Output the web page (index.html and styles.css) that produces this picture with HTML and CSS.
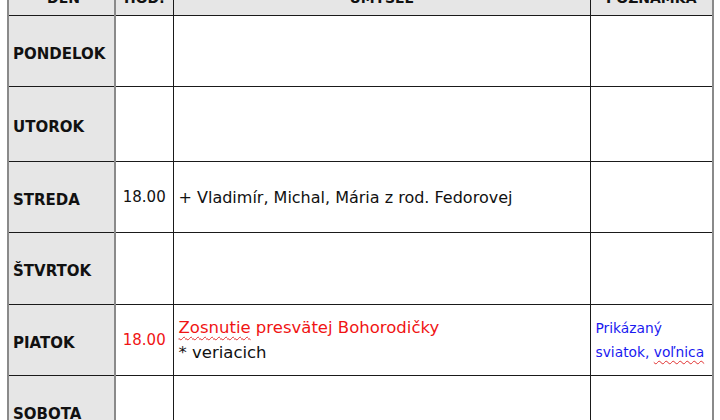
FILE: index.html
```html
<!DOCTYPE html>
<html lang="sk">
<head>
<meta charset="utf-8">
<link rel="stylesheet" href="styles.css">
</head>
<body>
<div class="page">
<table class="schedule">
  <colgroup>
    <col class="c-day"><col class="c-hod"><col class="c-umysel"><col class="c-pozn">
  </colgroup>
  <thead>
    <tr class="head">
      <th class="day">DEŇ</th><th>HOD.</th><th>ÚMYSEL</th><th class="last">POZNÁMKA</th>
    </tr>
  </thead>
  <tbody>
    <tr class="r1"><td class="day">PONDELOK</td><td></td><td></td><td class="last"></td></tr>
    <tr class="r2"><td class="day">UTOROK</td><td></td><td></td><td class="last"></td></tr>
    <tr class="r3"><td class="day">STREDA</td><td class="hod">18.00</td><td class="um">+ Vladimír, Michal, Mária z rod. Fedorovej</td><td class="last"></td></tr>
    <tr class="r4"><td class="day">ŠTVRTOK</td><td></td><td></td><td class="last"></td></tr>
    <tr class="r5"><td class="day">PIATOK</td><td class="hod red">18.00</td><td class="um"><div class="red"><span class="spell">Zosnutie</span> presvätej Bohorodičky</div><div>* veriacich</div></td><td class="last pozn"><div>Prikázaný</div><div>sviatok, <span class="spell">voľnica</span></div></td></tr>
    <tr class="r6"><td class="day">SOBOTA</td><td></td><td></td><td class="last"></td></tr>
  </tbody>
</table>
</div>
</body>
</html>
```
FILE: styles.css
```css
html, body {
  margin: 0;
  padding: 0;
  background: #fff;
}
.page {
  padding: 0 7px;
  overflow: hidden;
  height: 420px;
}
.schedule {
  margin-top: -15px;
  border-collapse: collapse;
  table-layout: fixed;
  width: 705px;
  font-family: "DejaVu Sans", "Liberation Sans", sans-serif;
  font-size: 16px;
  color: #111;
}
.c-day { width: 107px; }
.c-hod { width: 58px; }
.c-umysel { width: 417px; }
.c-pozn { width: 123px; }
.schedule th, .schedule td {
  border: 1px solid #1a1a1a;
  padding: 0 5px;
  vertical-align: middle;
  box-sizing: border-box;
}
.schedule th {
  background: #e6e6e6;
  height: 30px;
  vertical-align: top;
  padding-top: 4px;
  font-weight: bold;
  font-size: 14px;
  text-align: center;
}
.schedule .day {
  background: #e6e6e6;
  border-left: 2px solid #8a8a8a;
  border-right: 2px solid #8a8a8a;
  font-weight: bold;
  font-size: 15px;
  padding-left: 4px;
  padding-right: 0;
  padding-top: 5px;
}
.schedule th.day { padding-top: 4px; font-size: 14px; }
.schedule .last {
  border-right: 2px solid #8a8a8a;
}
.r1 td { height: 71px; }
.r2 td { height: 75px; }
.r3 td { height: 71px; }
.r4 td { height: 72px; }
.r5 td { height: 71px; }
.r6 td { height: 72px; }
.hod {
  text-align: center;
  font-size: 15px;
  padding: 0 2px;
}
.um {
  padding-left: 5px;
}
.red { color: #f01414; }
.r5 .um { font-size: 16.5px; line-height: 25px; }
.pozn {
  color: #1a1af0;
  font-size: 13.8px;
  line-height: 24px;
  padding-left: 4px;
  padding-right: 0;
}
.spell {
  text-decoration: underline wavy #e03030;
  text-decoration-thickness: 1px;
  text-underline-offset: 3px;
  text-decoration-skip-ink: none;
}
```
